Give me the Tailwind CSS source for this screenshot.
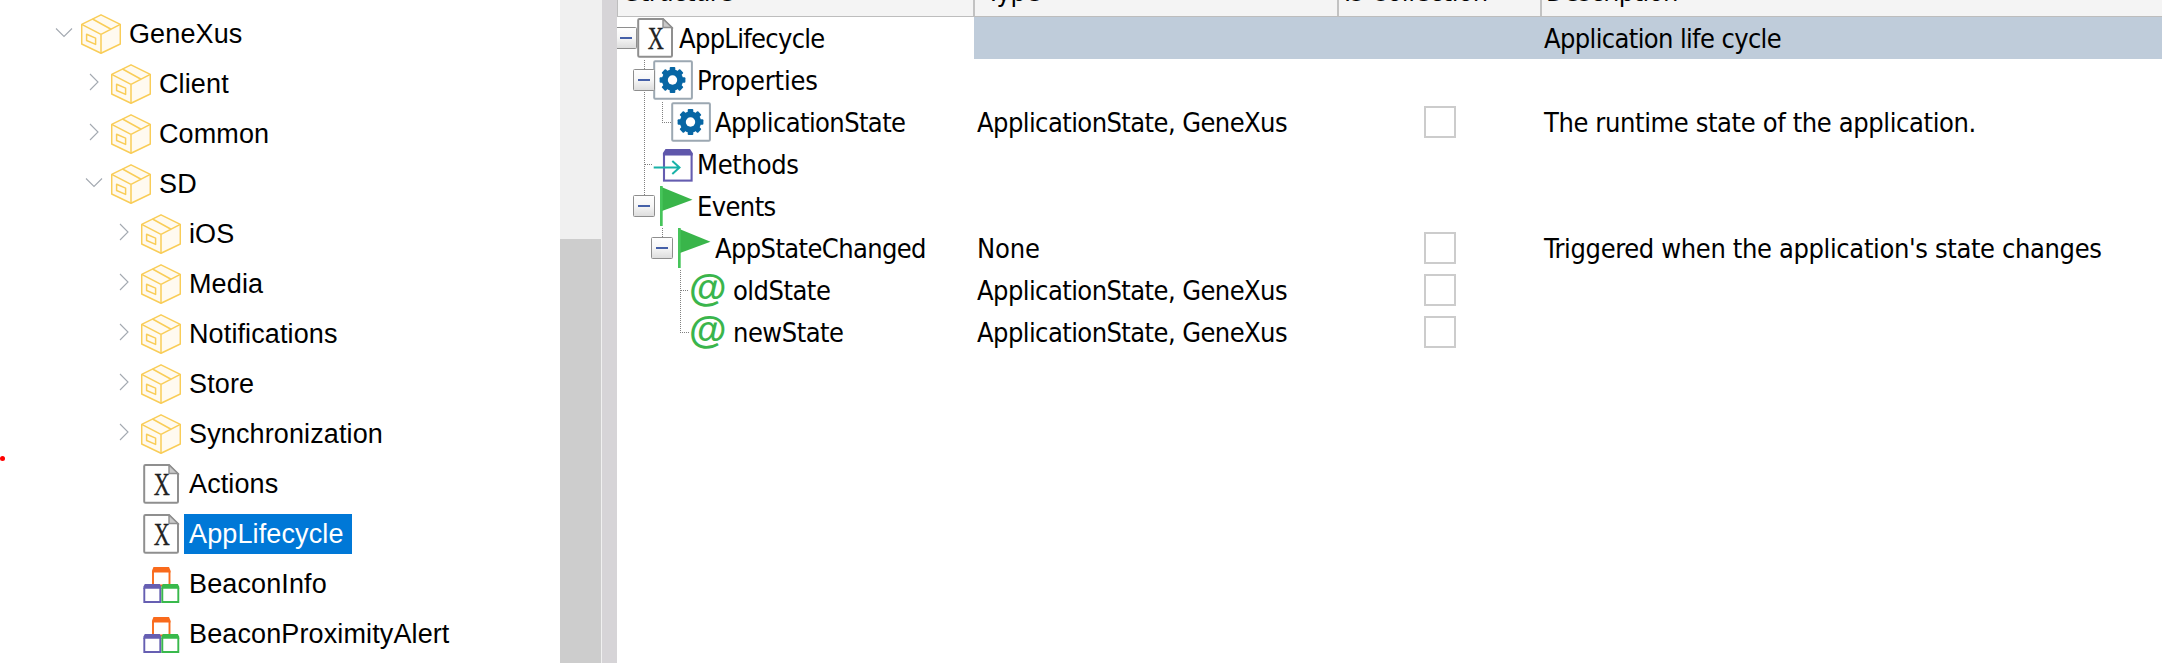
<!DOCTYPE html>
<html lang="en">
<head>
<meta charset="utf-8">
<title>AppLifecycle</title>
<script src="https://cdn.jsdelivr.net/npm/@tailwindcss/browser@4"></script>
</head>
<body class="bg-white">
<svg class="absolute size-0">
  <linearGradient id="mg" x2="0" y2="1"><stop stop-color="#fff"/><stop offset=".5" stop-color="#f6f6f6"/><stop offset="1" stop-color="#dcdcdc"/></linearGradient>
  <symbol id="box" viewBox="0 0 40 40">
    <path d="M20 .8 39.3 10.3V30L20 39.3.7 30V10.3Z" fill="#fffaf0" stroke="#f9cd58" stroke-width="1.5" stroke-linejoin="round"/>
    <path d="M.7 10.3 20 20.3l19.3-10M20 20.3v19M11.5 5 30.5 15.5M5.6 20.2v6.3l9 3.9v-6.3Z" fill="none" stroke="#f9cd58" stroke-width="1.5" stroke-linejoin="round"/>
  </symbol>
  <symbol id="doc" viewBox="0 0 40 40">
    <path d="M4.500 1H28l9 9v27.500a1.300 1.300 0 0 1-1.300 1.300H4.500a1.300 1.300 0 0 1-1.300-1.300V2.300A1.300 1.300 0 0 1 4.500 1Z" fill="#fff" stroke="#8f8f8f" stroke-width="2"/>
    <path d="M28 1v8.500h9Z" fill="#c9c9c9" stroke="#8f8f8f" stroke-width="1.400"/>
    <text transform="translate(12.700 31.300) scale(.72 1)" font-family="Liberation Serif, serif" font-size="31" fill="#222" stroke="#222" stroke-width=".3">X</text>
  </symbol>
  <symbol id="cubes" viewBox="0 0 40 40">
    <path d="M12 8v13.500h16.500V8" fill="#fff"/>
    <path d="M12 7v14.500h16.500V7" fill="none" stroke="#f96a1c" stroke-width="1.900"/>
    <path d="M11.050 8.500V6.500L12.500 3h15.500l1.450 3.500v2Z" fill="#f96a1c"/>
    <path d="M3.300 24v14h16V24" fill="#fff" stroke="#665fb2" stroke-width="1.900"/>
    <path d="M2.350 24.700v-2L3.800 20H18.800l1.450 2.700v2Z" fill="#665fb2"/>
    <path d="M21.300 24v14h16V24" fill="#fff" stroke="#39b94c" stroke-width="1.900"/>
    <path d="M20.350 24.700v-2L21.800 20h15l1.450 2.700v2Z" fill="#39b94c"/>
  </symbol>
  <symbol id="gear" viewBox="0 0 40 40">
    <rect x="1.200" y="1.300" width="37.700" height="37.500" rx="1" fill="#fff" stroke="#9ca8b2" stroke-width="2"/>
    <g fill="#0766a4" transform="translate(19.500 20)">
      <g id="teeth"><rect x="-2.800" y="-12.900" width="5.600" height="25.800" rx="1"/><rect x="-12.900" y="-2.800" width="25.800" height="5.600" rx="1"/></g>
      <use href="#teeth" transform="rotate(45)"/>
      <circle r="10.600"/><circle r="4.700" fill="#fff"/>
    </g>
  </symbol>
  <symbol id="method" viewBox="0 0 40 40">
    <rect x="11" y="10" width="27.600" height="26.600" fill="#fff" stroke="#655cb0" stroke-width="2.100"/>
    <path d="M9.950 11.500V9L12.500 5H37l2.650 4v2.500Z" fill="#5f57ab"/>
    <path d="M.7 23.500H27M19.300 17l7.200 6.500-7.200 6.500" fill="none" stroke="#19b2a8" stroke-width="2"/>
  </symbol>
  <symbol id="flag" viewBox="0 0 40 40">
    <path d="M9 1.300 39.500 13.800 9 25Z" fill="#39b54a"/><path d="M7 0h2.700v40H7Z" fill="#46c45a"/>
  </symbol>
  <symbol id="at" viewBox="0 0 40 40">
    <text x="0" y="31.300" font-family="Liberation Sans, sans-serif" font-weight="700" font-size="38.500" fill="#3ab54c">@</text>
  </symbol>
  <symbol id="right" viewBox="0 0 26 26"><path d="m9 3 8 8-8 8" fill="none" stroke="#a3a9b1" stroke-width="1.100"/></symbol>
  <symbol id="down" viewBox="0 0 26 26"><path d="m5 7.500 8 8 8-8" fill="none" stroke="#a3a9b1" stroke-width="1.100"/></symbol>
  <symbol id="minus" viewBox="0 0 22 22">
    <rect x=".5" y=".5" width="21" height="21" rx="1" fill="url(#mg)" stroke="#8e8e8e"/><path d="M5 11h12" stroke="#4560a8" stroke-width="2"/>
  </symbol>
</svg>

<div class="relative flex h-[663px] w-[2162px] overflow-hidden bg-white text-black">
  <nav class="w-[560px] shrink-0 pt-[9px] text-[27px] leading-[40px] tracking-[0.12px] whitespace-nowrap font-['Liberation_Sans',Arial,sans-serif]">
    <div class="flex h-[50px] items-center pl-[51px]"><svg class="mr-1 size-[26px]"><use href="#down"/></svg><svg class="size-10"><use href="#box"/></svg><span class="pl-2">GeneXus</span></div>
    <div class="flex h-[50px] items-center pl-[81px]"><svg class="mr-1 size-[26px]"><use href="#right"/></svg><svg class="size-10"><use href="#box"/></svg><span class="pl-2">Client</span></div>
    <div class="flex h-[50px] items-center pl-[81px]"><svg class="mr-1 size-[26px]"><use href="#right"/></svg><svg class="size-10"><use href="#box"/></svg><span class="pl-2">Common</span></div>
    <div class="flex h-[50px] items-center pl-[81px]"><svg class="mr-1 size-[26px]"><use href="#down"/></svg><svg class="size-10"><use href="#box"/></svg><span class="pl-2">SD</span></div>
    <div class="flex h-[50px] items-center pl-[111px]"><svg class="mr-1 size-[26px]"><use href="#right"/></svg><svg class="size-10"><use href="#box"/></svg><span class="pl-2">iOS</span></div>
    <div class="flex h-[50px] items-center pl-[111px]"><svg class="mr-1 size-[26px]"><use href="#right"/></svg><svg class="size-10"><use href="#box"/></svg><span class="pl-2">Media</span></div>
    <div class="flex h-[50px] items-center pl-[111px]"><svg class="mr-1 size-[26px]"><use href="#right"/></svg><svg class="size-10"><use href="#box"/></svg><span class="pl-2">Notifications</span></div>
    <div class="flex h-[50px] items-center pl-[111px]"><svg class="mr-1 size-[26px]"><use href="#right"/></svg><svg class="size-10"><use href="#box"/></svg><span class="pl-2">Store</span></div>
    <div class="flex h-[50px] items-center pl-[111px]"><svg class="mr-1 size-[26px]"><use href="#right"/></svg><svg class="size-10"><use href="#box"/></svg><span class="pl-2">Synchronization</span></div>
    <div class="flex h-[50px] items-center pl-[141px]"><svg class="size-10"><use href="#doc"/></svg><span class="pl-2">Actions</span></div>
    <div class="flex h-[50px] items-center pl-[141px]"><svg class="size-10"><use href="#doc"/></svg><span class="ml-[3px] w-[168px] bg-[#0078d7] pl-[5px] text-white">AppLifecycle</span></div>
    <div class="flex h-[50px] items-center pl-[141px]"><svg class="size-10"><use href="#cubes"/></svg><span class="pl-2">BeaconInfo</span></div>
    <div class="flex h-[50px] items-center pl-[141px]"><svg class="size-10"><use href="#cubes"/></svg><span class="pl-2">BeaconProximityAlert</span></div>
  </nav>
  <div class="w-[42px] shrink-0 bg-[#f0f0f0] pt-[239px]"><div class="h-full w-[41px] bg-[#cdcdcd]"></div></div>
  <div class="w-[15px] shrink-0 bg-[#d6d4d7]"></div>

  <main class="relative w-[1545px] overflow-hidden text-[27px] leading-[44px] whitespace-nowrap font-['DejaVu_Sans_Condensed','DejaVu_Sans',sans-serif]">
    <div class="flex h-[17px] border-b border-l border-[#bdbdbd] bg-[#f4f4f4]">
      <div class="w-[357px] border-r-2 border-[#c2c2c2] pl-[7px]"><div class="mt-[-30px] tracking-[-0.55px]">Structure</div></div>
      <div class="w-[364px] border-r-2 border-[#c2c2c2] pl-[11px]"><div class="mt-[-30px] tracking-[-0.2px]">Type</div></div>
      <div class="w-[203px] border-r-2 border-[#c2c2c2] pl-[5px]"><div class="mt-[-30px] tracking-[-0.3px]">Is Collection</div></div>
      <div class="flex-1 pl-[4px]"><div class="mt-[-30px] tracking-[-0.6px]">Description</div></div>
    </div>
    <div class="flex h-[42px]">
      <div class="flex w-[357px] items-center"><svg class="ml-[-2px] size-[22px] shrink-0"><use href="#minus"/></svg><svg class="ml-[-2px] size-10"><use href="#doc"/></svg><span class="pt-0.5 pl-1 tracking-[-0.7px]">AppLifecycle</span></div>
      <div class="flex flex-1 bg-[#bfccda] pl-[570px]"><span class="tracking-[-0.63px]">Application life cycle</span></div>
    </div>
    <div class="flex h-[42px]">
      <div class="flex w-[357px] items-center pl-4"><svg class="z-10 size-[22px] shrink-0"><use href="#minus"/></svg><svg class="ml-[-2px] size-10"><use href="#gear"/></svg><span class="pt-0.5 pl-1 tracking-[-0.2px]">Properties</span></div>
    </div>
    <div class="flex h-[42px]">
      <div class="flex w-[357px] items-center pl-[54px]"><svg class="size-10"><use href="#gear"/></svg><span class="pt-0.5 pl-1 tracking-[-0.6px]">ApplicationState</span></div>
      <div class="w-[364px] pl-[3px] tracking-[-0.57px]">ApplicationState, GeneXus</div>
      <div class="flex w-[203px] items-center pl-[86px]"><div class="size-8 border-2 border-[#ccc]"></div></div>
      <div class="pl-[3px] tracking-[-0.38px]">The runtime state of the application.</div>
    </div>
    <div class="flex h-[42px]">
      <div class="flex w-[357px] items-center pl-9"><svg class="size-10"><use href="#method"/></svg><span class="pt-0.5 pl-1 tracking-[-0.3px]">Methods</span></div>
    </div>
    <div class="flex h-[42px]">
      <div class="flex w-[357px] items-center pl-4"><svg class="z-10 size-[22px] shrink-0"><use href="#minus"/></svg><svg class="ml-[-2px] size-10"><use href="#flag"/></svg><span class="pt-0.5 pl-1 tracking-[-0.6px]">Events</span></div>
    </div>
    <div class="flex h-[42px]">
      <div class="flex w-[357px] items-center pl-[34px]"><svg class="z-10 size-[22px] shrink-0"><use href="#minus"/></svg><svg class="ml-[-2px] size-10"><use href="#flag"/></svg><span class="pt-0.5 pl-1 tracking-[-0.62px]">AppStateChanged</span></div>
      <div class="w-[364px] pl-[3px] tracking-[-0.1px]">None</div>
      <div class="flex w-[203px] items-center pl-[86px]"><div class="size-8 border-2 border-[#ccc]"></div></div>
      <div class="pl-[3px] tracking-[-0.36px]">Triggered when the application's state changes</div>
    </div>
    <div class="flex h-[42px]">
      <div class="flex w-[357px] items-center pl-[72px]"><svg class="size-10"><use href="#at"/></svg><span class="pt-0.5 pl-1 tracking-[-0.5px]">oldState</span></div>
      <div class="w-[364px] pl-[3px] tracking-[-0.57px]">ApplicationState, GeneXus</div>
      <div class="flex w-[203px] items-center pl-[86px]"><div class="size-8 border-2 border-[#ccc]"></div></div>
    </div>
    <div class="flex h-[42px]">
      <div class="flex w-[357px] items-center pl-[72px]"><svg class="size-10"><use href="#at"/></svg><span class="pt-0.5 pl-1 tracking-[-0.5px]">newState</span></div>
      <div class="w-[364px] pl-[3px] tracking-[-0.57px]">ApplicationState, GeneXus</div>
      <div class="flex w-[203px] items-center pl-[86px]"><div class="size-8 border-2 border-[#ccc]"></div></div>
    </div>
    <!-- Dotted tree connectors -->
    <svg class="pointer-events-none absolute top-0 left-0 h-[360px] w-[120px]" fill="none" stroke="#808080" stroke-dasharray="1 1" shape-rendering="crispEdges">
      <path d="M27.500 60v9M27.500 92v103M28 164.500h8M45.500 102v20.500h9M45.500 228v9M63.500 270v62.500h9M64 290.500h8"/>
    </svg>
  </main>

  <div class="absolute top-[456px] left-0 size-[5px] rounded-full bg-[#f00]"></div>
</div>
</body>
</html>
